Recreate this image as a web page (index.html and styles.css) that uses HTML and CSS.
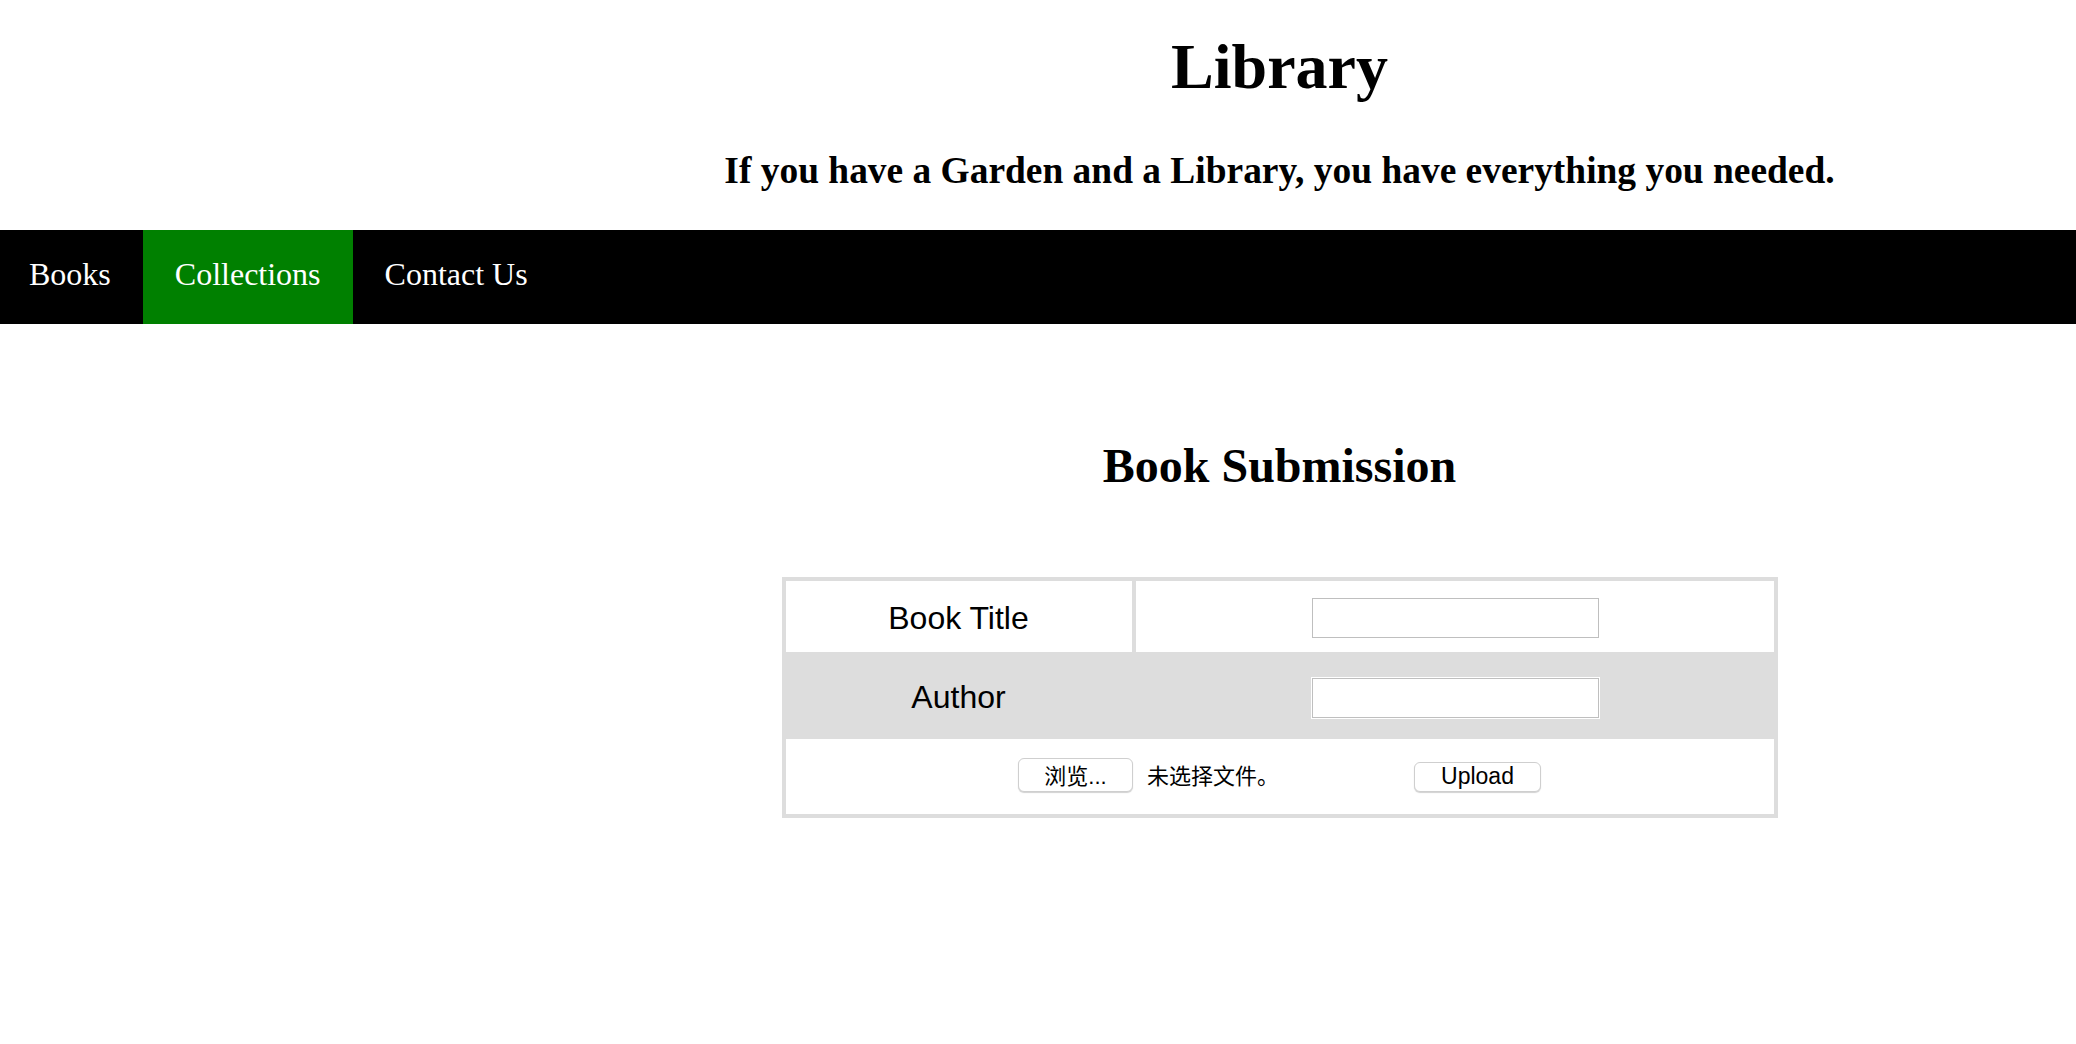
FILE: index.html
```html
<!DOCTYPE html>
<html lang="en">
<head>
<meta charset="utf-8">
<title>Library</title>
<link rel="stylesheet" href="styles.css">
</head>
<body>
<header class="site-header">
  <h1 class="site-title">Library</h1>
  <h3 class="site-tagline">If you have a Garden and a Library, you have everything you needed.</h3>
</header>
<nav class="main-nav">
  <a class="nav-link first" href="#">Books</a>
  <a class="nav-link active" href="#">Collections</a>
  <a class="nav-link" href="#">Contact Us</a>
</nav>
<main class="content">
  <h2 class="section-title">Book Submission</h2>
  <form class="submit-grid">
    <div class="cell label">Book Title</div>
    <div class="cell field"><input class="text-input" type="text"></div>
    <div class="cell label alt">Author</div>
    <div class="cell field alt"><input class="text-input" type="text"></div>
    <div class="cell upload-row">
      <span class="file-input">
        <span class="btn browse">浏览...</span>
        <span class="file-status">未选择文件。</span>
      </span>
      <span class="btn upload">Upload</span>
    </div>
  </form>
</main>
</body>
</html>
```
FILE: styles.css
```css
html, body {
  margin: 0;
  padding: 0;
  background: #fff;
  color: #000;
}
body {
  font-family: "Liberation Serif", "Times New Roman", serif;
}
.site-header {
  padding-left: 483px;
  padding-top: 30px;
  text-align: center;
  height: 200px;
}
.site-title {
  margin: 0;
  font-size: 64px;
  line-height: 74px;
  font-weight: bold;
}
.site-tagline {
  margin: 45px 0 0;
  font-size: 37.44px;
  line-height: 43px;
  font-weight: bold;
}
.main-nav {
  display: flex;
  background: #000;
  height: 94px;
}
.nav-link {
  display: block;
  color: #fff;
  text-decoration: none;
  font-size: 32px;
  line-height: 37px;
  padding: 26px 32px 31px;
}
.nav-link.first {
  padding-left: 29px;
}
.nav-link.active {
  background: #008000;
}
.content {
  padding-left: 483px;
  padding-top: 114px;
  padding-bottom: 120px;
}
.section-title {
  margin: 0 auto;
  text-align: center;
  font-size: 48px;
  line-height: 55px;
  font-weight: bold;
}
.submit-grid {
  margin: 84px auto 0;
  width: 996px;
  box-sizing: border-box;
  display: grid;
  grid-template-columns: 346px 638px;
  grid-template-rows: 71px 79px 75px;
  gap: 4px;
  border: 4px solid #ddd;
  background: #ddd;
  font-family: "Liberation Sans", Arial, "Noto Sans CJK SC", sans-serif;
}
.cell {
  background: #fff;
  display: flex;
  align-items: center;
  justify-content: center;
}
.cell.alt {
  background: #ddd;
}
.label {
  font-size: 32px;
  padding-top: 3px;
}
.field {
  padding-top: 2px;
}
.field.alt {
  padding-top: 5px;
}
.text-input {
  box-sizing: border-box;
  width: 287px;
  height: 40px;
  border: 1px solid #bfbfbf;
  box-shadow: 0 0 0 1px #fff;
  background: #fff;
  margin: 0 0 0 2px;
  padding: 0 4px;
}
.upload-row {
  grid-column: 1 / span 2;
  font-size: 23px;
  padding-bottom: 3px;
}
.file-input {
  display: flex;
  align-items: center;
  width: 390px;
  margin-right: 6px;
}
.btn {
  box-sizing: border-box;
  display: flex;
  align-items: center;
  justify-content: center;
  background: #fff;
  border: 1px solid #cfcfcf;
  border-radius: 6px;
  box-shadow: 0 1px 1px rgba(0, 0, 0, 0.18);
  font-size: 22px;
  color: #000;
  padding-bottom: 2px;
}
.browse {
  width: 115px;
  height: 34px;
}
.file-status {
  margin-left: 14px;
  font-size: 22px;
  padding-bottom: 2px;
}
.upload {
  width: 127px;
  height: 30px;
  margin-top: 4px;
  font-size: 23px;
}
```
